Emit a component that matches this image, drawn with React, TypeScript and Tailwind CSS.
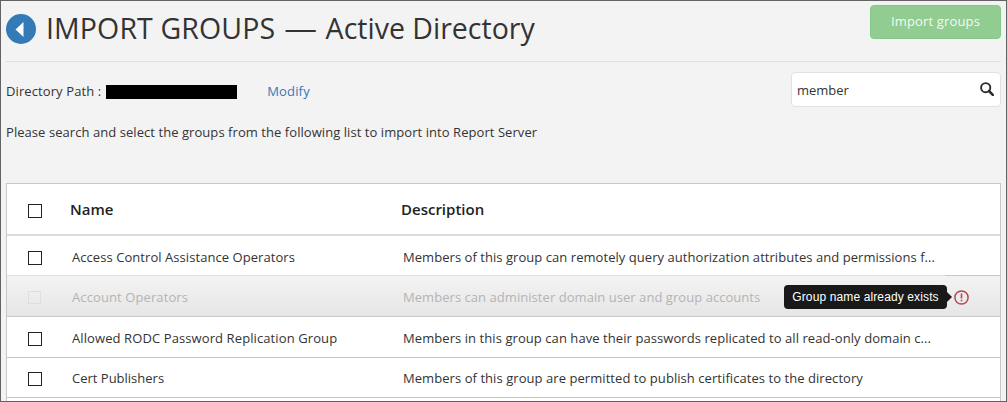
import React from "react";

type Group = {
  name: string;
  nameClass: string;
  description: string;
  descriptionClass: string;
  rowClass: string;
  exists?: boolean;
  beforeExisting?: boolean;
};

const groups: Group[] = [
  {
    name: "Access Control Assistance Operators",
    nameClass: "tracking-[0.06px]",
    description: "Members of this group can remotely query authorization attributes and permissions f...",
    descriptionClass: "tracking-[0.05px]",
    rowClass: "h-10 border-[#e2e2e2] bg-white pt-[5px]",
    beforeExisting: true,
  },
  {
    name: "Account Operators",
    nameClass: "tracking-[0.1px]",
    description: "Members can administer domain user and group accounts",
    descriptionClass: "tracking-[0.05px]",
    rowClass: "h-[41px] border-[#c8c8c8] bg-linear-to-b from-[#f3f3f3] to-[#e6e6e6] pt-[3px] text-[#b4b4b4]",
    exists: true,
  },
  {
    name: "Allowed RODC Password Replication Group",
    nameClass: "tracking-[0.1px]",
    description: "Members in this group can have their passwords replicated to all read-only domain c...",
    descriptionClass: "tracking-[0.07px]",
    rowClass: "h-[41px] border-[#c8c8c8] bg-white pt-[3px]",
  },
  {
    name: "Cert Publishers",
    nameClass: "",
    description: "Members of this group are permitted to publish certificates to the directory",
    descriptionClass: "tracking-[0.06px]",
    rowClass: "h-10 border-[#c8c8c8] bg-white pt-[3px]",
  },
];

function Checkbox({ disabled = false }: { disabled?: boolean }) {
  return (
    <span
      role="checkbox"
      aria-checked="false"
      aria-disabled={disabled}
      className={disabled ? "block size-[13px] border border-[#dedede]" : "block size-3.5 border border-[#222] bg-white"}
    />
  );
}

function ExistsWarning() {
  return (
    <span className="relative mr-[31px] ml-auto block size-[15px]">
      <svg viewBox="0 0 15 15" className="block size-[15px]" fill="none" stroke="#b5484b">
        <circle cx="7.5" cy="7.5" r="6.6" strokeWidth="1.5" />
        <path d="M7.5 3.5v5M7.5 9.7v1.6" strokeWidth="1.6" />
      </svg>
      <span className="absolute -top-[5px] -left-[170px] flex h-6 w-[163px] items-center justify-center rounded-[4px] bg-[#191919] pb-px font-['Liberation_Sans',sans-serif] text-[12px] tracking-[0.12px] whitespace-nowrap text-white">
        Group name already exists
        <span className="absolute top-[7px] left-full border-y-5 border-l-5 border-y-transparent border-l-[#191919]" />
      </span>
    </span>
  );
}

export default function App() {
  return (
    <main className="flex h-[402px] w-[1007px] flex-col overflow-hidden border border-[#636363] bg-[#f3f3f3] pr-[5px] pl-[5px] font-['Open_Sans',sans-serif] text-[13px] text-[#333]">
      <header className="flex h-[61px] shrink-0 items-start border-b border-[#dfdfdf]">
        <svg viewBox="0 0 30 30" className="mt-[13px] size-[30px] shrink-0">
          <circle cx="15" cy="15" r="15" fill="#337ab7" />
          <path d="M17.5 8v15L9.5 15.5z" fill="#fff" />
        </svg>
        <h1 className="ml-[10px] text-[28.5px] leading-[54px] whitespace-nowrap">
          <span className="tracking-[0.12px]">IMPORT GROUPS </span>
          <span className="inline-block origin-left scale-x-115 pr-[6px] pl-px">—</span> Active Directory
        </h1>
        <button className="mt-1 ml-auto h-[34px] w-[131px] rounded-[4px] border border-[#86c886] bg-[#91cc91] text-[13px] tracking-[0.15px] text-[#f3faf3]">
          Import groups
        </button>
      </header>

      <section className="flex h-[61px] shrink-0 pt-[10px]">
        <div className="flex h-10 items-center">
          <span className="tracking-[0.1px]">Directory Path :</span>
          <span className="ml-[5px] h-3.5 w-[131px] bg-black" />
          <a className="ml-[30px] tracking-[0.15px] text-[#337ab7]">Modify</a>
        </div>
        <div className="ml-auto flex h-[35px] w-[210px] items-center rounded-[4px] border border-[#e1e1e1] bg-white pr-[6px] pl-[5px]">
          <span className="pt-0.5">member</span>
          <svg viewBox="0 0 14 14" className="mb-0.5 ml-auto size-3.5" fill="none" stroke="#2b2b2b">
            <circle cx="5.7" cy="5.7" r="4.6" strokeWidth="1.9" />
            <path d="m9 9 3.8 3.8" strokeWidth="2.5" strokeLinecap="round" />
          </svg>
        </div>
      </section>

      <p className="-mt-px mb-px h-[60px] shrink-0 leading-5 tracking-[0.06px] whitespace-nowrap">
        Please search and select the groups from the following list to import into Report Server
      </p>

      <div role="table" className="flex w-[995px] grow flex-col border-x border-t border-[#c8c8c8] bg-white">
        <div role="row" className="flex h-[52px] shrink-0 items-center border-b-2 border-[#dcdcdc] text-[15px] font-semibold text-[#222]">
          <span className="w-[63px] pt-1 pl-[21px]"><Checkbox /></span>
          <span className="w-[331px]">Name</span>
          <span>Description</span>
        </div>
        {groups.map((group) => (
          <div
            role="row"
            key={group.name}
            className={"flex shrink-0 items-center border-b whitespace-nowrap " + group.rowClass}
          >
            <span className="w-[65px] pl-[21px]"><Checkbox disabled={group.exists} /></span>
            <span className="w-[331px]"><span className={group.nameClass}>{group.name}</span></span>
            <span className={group.descriptionClass}>{group.description}</span>
            {group.exists && <ExistsWarning />}
            {group.beforeExisting && <span className="-mb-px ml-auto w-[55px] self-stretch border-b border-[#c8c8c8]" />}
          </div>
        ))}
      </div>
    </main>
  );
}
